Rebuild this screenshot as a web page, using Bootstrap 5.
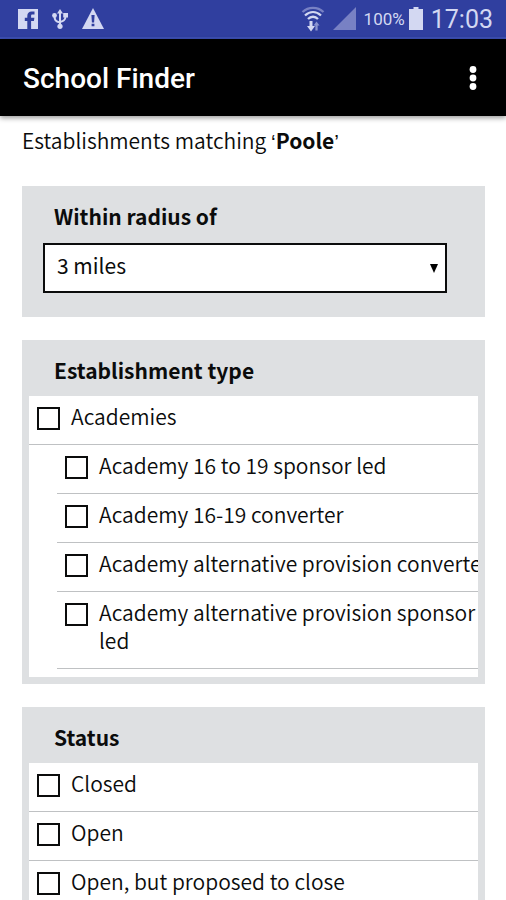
<!DOCTYPE html>
<html lang="en">
<head>
<meta charset="utf-8">
<meta name="viewport" content="width=device-width, initial-scale=1">
<title>School Finder</title>
<link href="https://cdn.jsdelivr.net/npm/bootstrap@5.3.0/dist/css/bootstrap.min.css" rel="stylesheet">
<style>
  body { font: 350 21px/28px "Noto Sans CJK SC", "Noto Sans", sans-serif; color: #0b0c0c; background: #fff; }
  .status-strip { height: 39px; padding: 0 13px 0 18px; background: #303f9f; border-bottom: 2px solid #3d4fb3; color: #d3d8f2; font-family: Roboto, sans-serif; font-weight: 400; }
  .notice-icons { gap: 14px; }
  .battery-text { font-size: 17px; }
  .clock { font-size: 25px; padding-top: 2px; }
  .app-bar { height: 77px; padding: 3px 21px 0 23px; background: #000; color: #fff; box-shadow: 0 2px 5px rgba(0, 0, 0, .4); z-index: 1; }
  .app-title { font: 500 28px/32px Roboto, sans-serif; }
  .page-body { padding: 10px 21px 0 22px; scrollbar-width: none; }
  .intro { margin-bottom: 32px; }
  .intro-quote { font-family: "Liberation Sans", sans-serif; line-height: 1; }
  .filter-panel { background: #dee0e2; padding: 0 7px 7px; margin-bottom: 23px; }
  .filter-title { font-size: 21px; line-height: 28px; font-weight: 700; padding: 16px 25px 12px; margin: 0; display: block; }
  .radius-panel { padding-bottom: 24px; }
  .radius-panel .filter-title { padding-bottom: 13px; }
  .radius-box { margin: 0 31px 0 14px; position: relative; }
  .radius-select { appearance: none; width: 100%; height: 50px; border: 2px solid #0b0c0c; border-radius: 0; background: #fff; color: inherit; padding: 0 12px 6px; display: block; }
  .radius-arrow { position: absolute; right: 9px; top: 21px; pointer-events: none; }
  .option-list { background: #fff; overflow: hidden auto; scrollbar-width: none; }
  .option-scroll { padding-bottom: 8px; }
  .option-row { border-bottom: 1px solid #bfc1c3; padding: 6px 0 14px 8px; gap: 11px; }
  .option-nested { margin-left: 28px; }
  .option-box { appearance: none; flex: none; width: 23px; height: 23px; margin: 5px 0 0; border: 2px solid #0b0c0c; background: #fff; }
  .option-box:checked { background: #0b0c0c; box-shadow: inset 0 0 0 3px #fff; }
</style>
<script src="https://cdn.jsdelivr.net/npm/bootstrap@5.3.0/dist/js/bootstrap.bundle.min.js"></script>
</head>
<body class="vh-100 d-flex flex-column overflow-hidden">
<div class="status-strip d-flex align-items-center justify-content-between flex-shrink-0">
  <div class="notice-icons d-flex align-items-center">
    <svg width="20" height="20" viewBox="0 0 20 20" aria-hidden="true"><path fill="#d3d8f2" d="M0 0h20v20H0z"/><path fill="#303f9f" d="M9.300 20v-8H6.800V8.800h2.500V7c0-3 1.700-4.500 4.300-4.500h2.900v3h-2c-1 0-1.400.5-1.400 1.400v1.900h3.300l-.5 3.200h-2.800v8z"/></svg>
    <svg width="16" height="20" viewBox="0 0 16 20" aria-hidden="true" fill="none" stroke="#d3d8f2" stroke-width="2"><path d="M8 3v14M8 13.500C3.500 12.500 2.500 11 2.500 7M8 13c4.500-1 5.500-2.500 5.500-6"/><path fill="#d3d8f2" stroke="none" d="M8 0l3 4.500H5zM11.200 4H16v4.500h-4.800z"/><circle cx="2.500" cy="6.500" r="2.400" fill="#d3d8f2" stroke="none"/><circle cx="8" cy="17.300" r="2.600" fill="#d3d8f2" stroke="none"/></svg>
    <svg width="22" height="21" viewBox="0 0 22 21" aria-hidden="true"><path fill="#d3d8f2" d="M11 0l11 21H0z"/><path fill="#303f9f" d="M9.400 7h3.200l-.5 7.500H9.900zM9.600 15.700h2.800v2.500H9.600z"/></svg>
  </div>
  <div class="d-flex align-items-center">
    <svg width="24" height="26" viewBox="0 0 24 26" aria-hidden="true" fill="none" stroke="#d3d8f2" stroke-width="2.300"><path stroke="#7881c4" d="M1.500 6c6-5.500 15-5.500 21 0"/><path d="M4 9.500c5-4.500 11-4.500 16 0M7 13c3-3 7-3 10 0"/><path stroke-width="3" d="M10 15v6"/><path fill="#d3d8f2" stroke="none" d="M6 20h8l-4 5.500z"/><path stroke="#8a94d0" d="M15.500 18v6.500"/><path fill="#8a94d0" stroke="none" d="M12.500 19.500l3-4 3 4z"/></svg>
    <svg class="ms-2 me-1" width="23" height="23" viewBox="0 0 23 23" aria-hidden="true"><path fill="#7881c4" d="M23 0v23H0z"/></svg>
    <span class="battery-text ms-1">100%</span>
    <svg class="ms-1" width="14" height="23" viewBox="0 0 14 23" aria-hidden="true"><path fill="#d3d8f2" d="M4.500 0h5v2H14v21H0V2h4.500z"/></svg>
    <span class="clock ms-2">17:03</span>
  </div>
</div>
<header class="app-bar d-flex align-items-center justify-content-between flex-shrink-0">
  <h1 class="app-title m-0">School Finder</h1>
  <button type="button" class="btn p-0 border-0 d-flex px-2" aria-label="More options"><svg width="8" height="26" viewBox="0 0 8 26" fill="#fff" aria-hidden="true"><circle cx="4" cy="3.500" r="3.400"/><circle cx="4" cy="12" r="3.400"/><circle cx="4" cy="20.500" r="3.400"/></svg></button>
</header>
<main class="page-body flex-grow-1 overflow-auto">
  <p class="intro">Establishments matching <span class="intro-quote">‘</span><b>Poole</b><span class="intro-quote">’</span></p>
  <section class="filter-panel radius-panel">
    <label class="filter-title" for="radius">Within radius of</label>
    <div class="radius-box">
      <select class="radius-select" id="radius"><option>3 miles</option></select>
      <svg class="radius-arrow" width="8" height="9" viewBox="0 0 8 9" aria-hidden="true"><path d="M0 0h8L4 9z"/></svg>
    </div>
  </section>
  <section class="filter-panel">
    <h2 class="filter-title">Establishment type</h2>
    <div class="option-list option-scroll">
      <div class="option-row d-flex"><input class="option-box" type="checkbox" id="t1"><label for="t1">Academies</label></div>
      <div class="option-nested">
        <div class="option-row d-flex"><input class="option-box" type="checkbox" id="t2"><label for="t2">Academy 16 to 19 sponsor led</label></div>
        <div class="option-row d-flex"><input class="option-box" type="checkbox" id="t3"><label for="t3">Academy 16-19 converter</label></div>
        <div class="option-row d-flex"><input class="option-box" type="checkbox" id="t4"><label class="text-nowrap" for="t4">Academy alternative provision converter</label></div>
        <div class="option-row d-flex"><input class="option-box" type="checkbox" id="t5"><label for="t5">Academy alternative provision sponsor led</label></div>
      </div>
    </div>
  </section>
  <section class="filter-panel">
    <h2 class="filter-title">Status</h2>
    <div class="option-list">
      <div class="option-row d-flex"><input class="option-box" type="checkbox" id="s1"><label for="s1">Closed</label></div>
      <div class="option-row d-flex"><input class="option-box" type="checkbox" id="s2"><label for="s2">Open</label></div>
      <div class="option-row d-flex"><input class="option-box" type="checkbox" id="s3"><label for="s3">Open, but proposed to close</label></div>
    </div>
  </section>
</main>
</body>
</html>
